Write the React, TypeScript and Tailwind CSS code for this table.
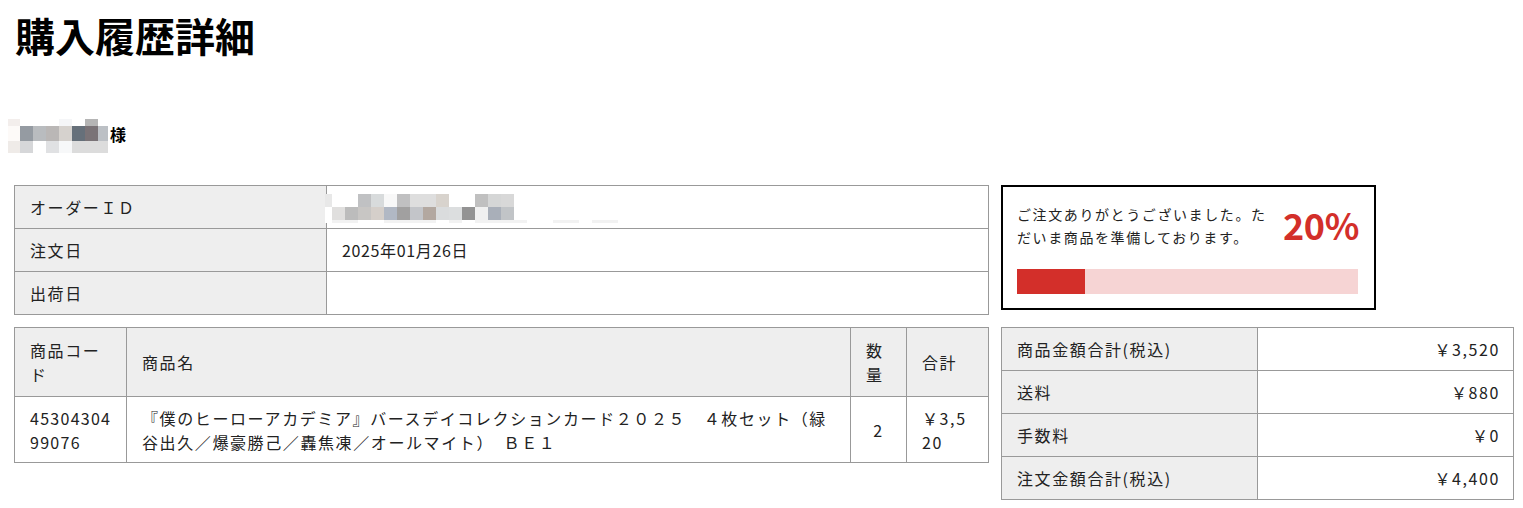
import React from "react";

const nameCols = ["w-[12px]", "w-[13px]", "w-[13px]", "w-[13px]", "w-[13px]", "w-[13px]", "w-[13px]", "w-[10px]"];
const nameRows: { h: string; cells: string[] }[] = [
  { h: "h-[7px]", cells: ["bg-[#f3eeec]", "bg-white", "bg-white", "bg-white", "bg-[#f5f6f8]", "bg-white", "bg-[#b5b5b5]", "bg-white"] },
  { h: "h-[15px]", cells: ["bg-[#fdfaf8]", "bg-[#959ba2]", "bg-[#b9bcbf]", "bg-[#bab7b6]", "bg-[#d6d2ce]", "bg-[#66707a]", "bg-[#7a7377]", "bg-[#bcc0c5]"] },
  { h: "h-[12px]", cells: ["bg-[#efebe8]", "bg-[#d6d7d9]", "bg-white", "bg-[#e0e1e3]", "bg-[#f7f8f9]", "bg-[#dcdcdc]", "bg-[#dcdcdc]", "bg-[#dcdcdc]"] },
];

const idCols = ["w-[7px]", "w-[13px]", "w-[13px]", "w-[13px]", "w-[13px]", "w-[13px]", "w-[13px]", "w-[13px]", "w-[13px]", "w-[13px]", "w-[13px]", "w-[13px]", "w-[13px]", "w-[13px]", "w-[13px]", "w-[13px]", "w-[13px]", "w-[13px]", "w-[13px]", "w-[13px]", "w-[13px]", "w-[13px]", "w-[13px]", "w-[13px]"];
const idRows: { h: string; cells: string[] }[] = [
  {
    h: "h-[13px]",
    cells: ["bg-[#e8e8e8]", "bg-white", "bg-white", "bg-[#c0c1c3]", "bg-[#d8dbdc]", "bg-[#f8f8f8]", "bg-[#c0c0c1]", "bg-[#dedede]", "bg-[#dedede]", "bg-[#d8d3cd]", "bg-white", "bg-white", "bg-[#c0c0c0]", "bg-[#d5d6d6]", "bg-[#d8d8d8]", "bg-white", "bg-white", "bg-white", "bg-white", "bg-white", "bg-white", "bg-white", "bg-white", "bg-white"],
  },
  {
    h: "h-[13px]",
    cells: ["bg-white", "bg-[#e0dfde]", "bg-[#bcbcbc]", "bg-[#c8c6c4]", "bg-[#d5cfca]", "bg-[#b1b8c4]", "bg-[#a1a0a0]", "bg-[#c3c5c9]", "bg-[#b3a8a0]", "bg-[#dadcdd]", "bg-[#dcdedf]", "bg-[#939393]", "bg-[#f0f0f0]", "bg-[#a9afb9]", "bg-[#c1c4c7]", "bg-white", "bg-white", "bg-white", "bg-white", "bg-white", "bg-white", "bg-white", "bg-white", "bg-white"],
  },
  {
    h: "h-[3px]",
    cells: ["bg-white", "bg-[#f2f2f2]", "bg-[#f2f2f2]", "bg-white", "bg-white", "bg-[#f2f2f2]", "bg-[#f2f2f2]", "bg-[#f2f2f2]", "bg-[#f2f2f2]", "bg-white", "bg-[#f2f2f2]", "bg-white", "bg-[#f2f2f2]", "bg-[#f2f2f2]", "bg-[#f2f2f2]", "bg-[#f2f2f2]", "bg-white", "bg-white", "bg-[#f2f2f2]", "bg-[#f2f2f2]", "bg-white", "bg-[#f2f2f2]", "bg-[#f2f2f2]", "bg-white"],
  },
];

function Pixels({ cols, rows }: { cols: string[]; rows: { h: string; cells: string[] }[] }) {
  return (
    <div className="flex flex-col">
      {rows.map((r, i) => (
        <div key={i} className={`flex ${r.h}`}>
          {r.cells.map((c, j) => (
            <div key={j} className={`${cols[j]} h-full ${c}`} />
          ))}
        </div>
      ))}
    </div>
  );
}

const cell = "border border-[#999] px-[15px]";
const num = "border border-[#999] pl-[15px] pr-[13px] text-right";
const th = "border border-[#999] px-[15px] bg-[#eeeeee] font-normal text-left";

export default function App() {
  return (
    <div className="min-h-[508px] bg-white text-[#222] font-['Noto_Sans_CJK_JP','Noto_Sans',sans-serif] tracking-[0.1em] text-[16px] leading-[24px] pt-[7px]">
      <h1 className="pl-[15px] text-[40px] leading-[56px] font-bold text-black tracking-normal">購入履歴詳細</h1>

      <div className="mt-[56px] ml-[8px] flex items-center h-[34px]">
        <Pixels cols={nameCols} rows={nameRows} />
        <span className="ml-[2px] font-bold text-black leading-[20px] -mt-[4px]">様</span>
      </div>

      <div className="mt-[32px] ml-[14px] grid grid-cols-[975px_513px] gap-x-[12px] gap-y-[12px] items-start">
        <table className="w-[975px] border-collapse table-fixed">
          <colgroup>
            <col className="w-[312px]" />
            <col />
          </colgroup>
          <tbody>
            <tr className="h-[43px]">
              <th className={th}>オーダーＩＤ</th>
              <td className="border border-[#999] pl-0">
                <div className="-ml-[2px] pt-[3px]">
                  <Pixels cols={idCols} rows={idRows} />
                </div>
              </td>
            </tr>
            <tr className="h-[43px]">
              <th className={th}>注文日</th>
              <td className={`${cell} tracking-[0.04em]`}>2025年01月26日</td>
            </tr>
            <tr className="h-[43px]">
              <th className={th}>出荷日</th>
              <td className={cell}></td>
            </tr>
          </tbody>
        </table>

        <div className="w-[375px] h-[125px] border-2 border-black px-[14px] pt-[16px]">
          <div className="flex justify-between items-start">
            <p className="w-[252px] text-[14px] leading-[23px]">
              ご注文ありがとうございました。ただいま商品を準備しております。
            </p>
            <span className="text-[36px] leading-[40px] font-bold text-[#d32f2a] tracking-[-0.01em] mr-[1px] mt-[1px]">20%</span>
          </div>
          <div className="mt-[20px] h-[25px] w-[341px] bg-[#f6d4d4]">
            <div className="h-full w-[20%] bg-[#d32f2a]" />
          </div>
        </div>

        <table className="w-[975px] border-collapse table-fixed">
          <colgroup>
            <col className="w-[112px]" />
            <col />
            <col className="w-[56px]" />
            <col className="w-[82px]" />
          </colgroup>
          <thead>
            <tr className="h-[69px]">
              <th className={th}>商品コード</th>
              <th className={th}>商品名</th>
              <th className={th}>数量</th>
              <th className={th}>合計</th>
            </tr>
          </thead>
          <tbody>
            <tr className="h-[66px]">
              <td className={`${cell} tracking-[0.08em]`}>
                45304304
                <br />
                99076
              </td>
              <td className={cell}>『僕のヒーローアカデミア』バースデイコレクションカード２０２５　４枚セット（緑谷出久／爆豪勝己／轟焦凍／オールマイト）　ＢＥ１</td>
              <td className={`${cell} text-center`}>2</td>
              <td className={`${cell} break-all`}>￥3,520</td>
            </tr>
          </tbody>
        </table>

        <table className="w-[513px] border-collapse table-fixed">
          <colgroup>
            <col className="w-[256px]" />
            <col />
          </colgroup>
          <tbody>
            <tr className="h-[43px]">
              <th className={th}>商品金額合計(税込)</th>
              <td className={num}>￥3,520</td>
            </tr>
            <tr className="h-[43px]">
              <th className={th}>送料</th>
              <td className={num}>￥880</td>
            </tr>
            <tr className="h-[43px]">
              <th className={th}>手数料</th>
              <td className={num}>￥0</td>
            </tr>
            <tr className="h-[43px]">
              <th className={th}>注文金額合計(税込)</th>
              <td className={num}>￥4,400</td>
            </tr>
          </tbody>
        </table>
      </div>
    </div>
  );
}
